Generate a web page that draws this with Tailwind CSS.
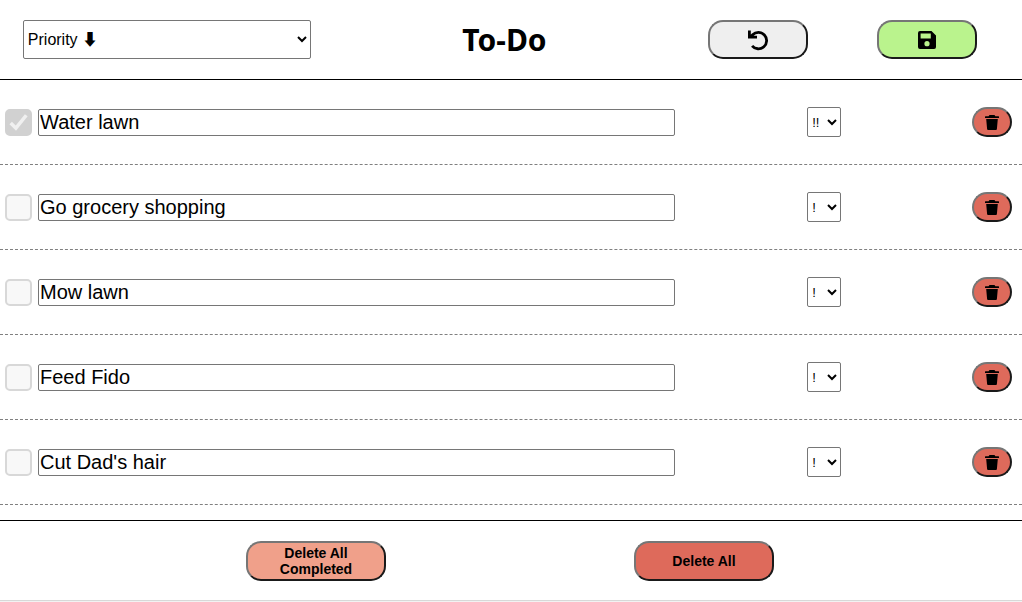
<!DOCTYPE html>
<html lang="en">
<head>
<meta charset="utf-8">
<meta name="viewport" content="width=device-width, initial-scale=1">
<title>To-Do</title>
<script src="https://cdn.jsdelivr.net/npm/@tailwindcss/browser@4"></script>
</head>
<body class="flex h-screen flex-col overflow-hidden bg-[#f2f2f2] pb-px font-['Liberation_Sans',Arial,sans-serif] text-black">
<svg class="hidden" aria-hidden="true">
  <symbol id="trash" viewBox="0 0 14 15"><path d="M4.500 0h5l.9 1.200H13.500a.5.5 0 0 1 .5.5V3H0V1.700a.5.5 0 0 1 .5-.5H3.600zM1.200 4h11.600l-.9 10a1 1 0 0 1-1 1H3.100a1 1 0 0 1-1-1z"/></symbol>
  <symbol id="check" viewBox="0 0 26 26"><path d="M5.500 13.500l5 5L20.500 6" fill="none" stroke="#f0f0f0" stroke-width="3.400"/></symbol>
</svg>
<header class="-ml-0.5 grid h-20 shrink-0 grid-cols-[2fr_2fr_1fr_1fr] items-center justify-items-center border-b border-black bg-white pr-[11px]">
  <select aria-label="Sort by" class="h-[39px] w-72 rounded-[2px] border border-[#767676] bg-white font-['Liberation_Sans','Noto_Sans_CJK_JP',sans-serif] text-base">
    <option>Priority ⬇</option>
    <option>Priority ⬆</option>
  </select>
  <h1 class="font-['Noto_Sans',sans-serif] text-3xl font-bold">To-Do</h1>
  <button type="button" aria-label="Undo" class="flex h-[39px] w-[100px] items-center justify-center rounded-[15px] border-2 border-t-[#767676] border-r-[#1a1a1a] border-b-[#1a1a1a] border-l-[#767676] bg-[#efefef]">
    <svg class="size-6" viewBox="0 0 24 24" fill="none" stroke="currentColor" stroke-width="2.800"><path d="M3.400 2.500v6.700H11M4.300 9.200L6.600 6.800A8.200 8.200 0 1 1 6.100 17.800"/></svg>
  </button>
  <button type="button" aria-label="Save" class="flex h-[39px] w-[100px] items-center justify-center rounded-[15px] border-2 border-t-[#767676] border-r-[#1a1a1a] border-b-[#1a1a1a] border-l-[#767676] bg-[#baf38d]">
    <svg class="size-[18px]" viewBox="0 0 18 18" fill="currentColor"><path fill-rule="evenodd" d="M2 0h11.500L18 4.500V16a2 2 0 0 1-2 2H2a2 2 0 0 1-2-2V2a2 2 0 0 1 2-2zm.6 2.600v5h10.200v-5zM9 10.100a2.600 2.600 0 1 0 0 5.200 2.600 2.600 0 0 0 0-5.200z"/></svg>
  </button>
</header>

<main class="min-h-0 flex-1 overflow-hidden bg-white">
  <ul>
    <li class="flex h-[85px] items-center justify-between border-b border-dashed border-[#808080] pr-2.5 pl-[5px]">
      <div class="flex w-2/3 items-center gap-1.5 pr-px">
        <div class="relative size-[27px] shrink-0">
          <input type="checkbox" checked disabled aria-label="Water lawn done" class="block size-full appearance-none rounded-[5px] border-2 border-[#d8d8d8] bg-[#f8f8f8] checked:border-[#d1d1d1] checked:bg-[#d1d1d1]">
          <svg class="absolute inset-0 size-full" aria-hidden="true"><use href="#check"/></svg>
        </div>
        <input type="text" value="Water lawn" aria-label="Task 1" class="h-[27px] min-w-0 flex-1 rounded-[2px] border border-[#767676] px-px text-xl">
      </div>
      <select aria-label="Priority of task 1" class="h-[30px] w-[34px] rounded-[2px] border border-[#767676] bg-white text-[13px]"><option>!</option><option selected>!!</option><option>!!!</option></select>
      <button type="button" aria-label="Delete task 1" class="flex h-[30px] w-10 items-center justify-center rounded-[15px] border-2 border-t-[#767676] border-r-[#1a1a1a] border-b-[#1a1a1a] border-l-[#767676] bg-[#de6a5b]"><svg class="h-[15px] w-3.5" fill="currentColor"><use href="#trash"/></svg></button>
    </li>
    <li class="flex h-[85px] items-center justify-between border-b border-dashed border-[#808080] pr-2.5 pl-[5px]">
      <div class="flex w-2/3 items-center gap-1.5 pr-px">
        <input type="checkbox" disabled aria-label="Go grocery shopping done" class="size-[27px] shrink-0 appearance-none rounded-[5px] border-2 border-[#d8d8d8] bg-[#f8f8f8]">
        <input type="text" value="Go grocery shopping" aria-label="Task 2" class="h-[27px] min-w-0 flex-1 rounded-[2px] border border-[#767676] px-px text-xl">
      </div>
      <select aria-label="Priority of task 2" class="h-[30px] w-[34px] rounded-[2px] border border-[#767676] bg-white text-[13px]"><option selected>!</option><option>!!</option><option>!!!</option></select>
      <button type="button" aria-label="Delete task 2" class="flex h-[30px] w-10 items-center justify-center rounded-[15px] border-2 border-t-[#767676] border-r-[#1a1a1a] border-b-[#1a1a1a] border-l-[#767676] bg-[#de6a5b]"><svg class="h-[15px] w-3.5" fill="currentColor"><use href="#trash"/></svg></button>
    </li>
    <li class="flex h-[85px] items-center justify-between border-b border-dashed border-[#808080] pr-2.5 pl-[5px]">
      <div class="flex w-2/3 items-center gap-1.5 pr-px">
        <input type="checkbox" disabled aria-label="Mow lawn done" class="size-[27px] shrink-0 appearance-none rounded-[5px] border-2 border-[#d8d8d8] bg-[#f8f8f8]">
        <input type="text" value="Mow lawn" aria-label="Task 3" class="h-[27px] min-w-0 flex-1 rounded-[2px] border border-[#767676] px-px text-xl">
      </div>
      <select aria-label="Priority of task 3" class="h-[30px] w-[34px] rounded-[2px] border border-[#767676] bg-white text-[13px]"><option selected>!</option><option>!!</option><option>!!!</option></select>
      <button type="button" aria-label="Delete task 3" class="flex h-[30px] w-10 items-center justify-center rounded-[15px] border-2 border-t-[#767676] border-r-[#1a1a1a] border-b-[#1a1a1a] border-l-[#767676] bg-[#de6a5b]"><svg class="h-[15px] w-3.5" fill="currentColor"><use href="#trash"/></svg></button>
    </li>
    <li class="flex h-[85px] items-center justify-between border-b border-dashed border-[#808080] pr-2.5 pl-[5px]">
      <div class="flex w-2/3 items-center gap-1.5 pr-px">
        <input type="checkbox" disabled aria-label="Feed Fido done" class="size-[27px] shrink-0 appearance-none rounded-[5px] border-2 border-[#d8d8d8] bg-[#f8f8f8]">
        <input type="text" value="Feed Fido" aria-label="Task 4" class="h-[27px] min-w-0 flex-1 rounded-[2px] border border-[#767676] px-px text-xl">
      </div>
      <select aria-label="Priority of task 4" class="h-[30px] w-[34px] rounded-[2px] border border-[#767676] bg-white text-[13px]"><option selected>!</option><option>!!</option><option>!!!</option></select>
      <button type="button" aria-label="Delete task 4" class="flex h-[30px] w-10 items-center justify-center rounded-[15px] border-2 border-t-[#767676] border-r-[#1a1a1a] border-b-[#1a1a1a] border-l-[#767676] bg-[#de6a5b]"><svg class="h-[15px] w-3.5" fill="currentColor"><use href="#trash"/></svg></button>
    </li>
    <li class="flex h-[85px] items-center justify-between border-b border-dashed border-[#808080] pr-2.5 pl-[5px]">
      <div class="flex w-2/3 items-center gap-1.5 pr-px">
        <input type="checkbox" disabled aria-label="Cut Dad's hair done" class="size-[27px] shrink-0 appearance-none rounded-[5px] border-2 border-[#d8d8d8] bg-[#f8f8f8]">
        <input type="text" value="Cut Dad's hair" aria-label="Task 5" class="h-[27px] min-w-0 flex-1 rounded-[2px] border border-[#767676] px-px text-xl">
      </div>
      <select aria-label="Priority of task 5" class="h-[30px] w-[34px] rounded-[2px] border border-[#767676] bg-white text-[13px]"><option selected>!</option><option>!!</option><option>!!!</option></select>
      <button type="button" aria-label="Delete task 5" class="flex h-[30px] w-10 items-center justify-center rounded-[15px] border-2 border-t-[#767676] border-r-[#1a1a1a] border-b-[#1a1a1a] border-l-[#767676] bg-[#de6a5b]"><svg class="h-[15px] w-3.5" fill="currentColor"><use href="#trash"/></svg></button>
    </li>
  </ul>
</main>

<footer class="flex h-[81px] shrink-0 items-center justify-center gap-62 border-t border-b border-t-black border-b-[#d8d8d8] bg-white pr-0.5 text-sm/4 font-bold">
  <button type="button" class="h-10 w-[140px] rounded-[15px] border-2 border-t-[#767676] border-r-[#1a1a1a] border-b-[#1a1a1a] border-l-[#767676] bg-[#f0a08a] px-6">Delete All Completed</button>
  <button type="button" class="h-10 w-[140px] rounded-[15px] border-2 border-t-[#767676] border-r-[#1a1a1a] border-b-[#1a1a1a] border-l-[#767676] bg-[#de6a5b] px-6">Delete All</button>
</footer>
</body>
</html>
